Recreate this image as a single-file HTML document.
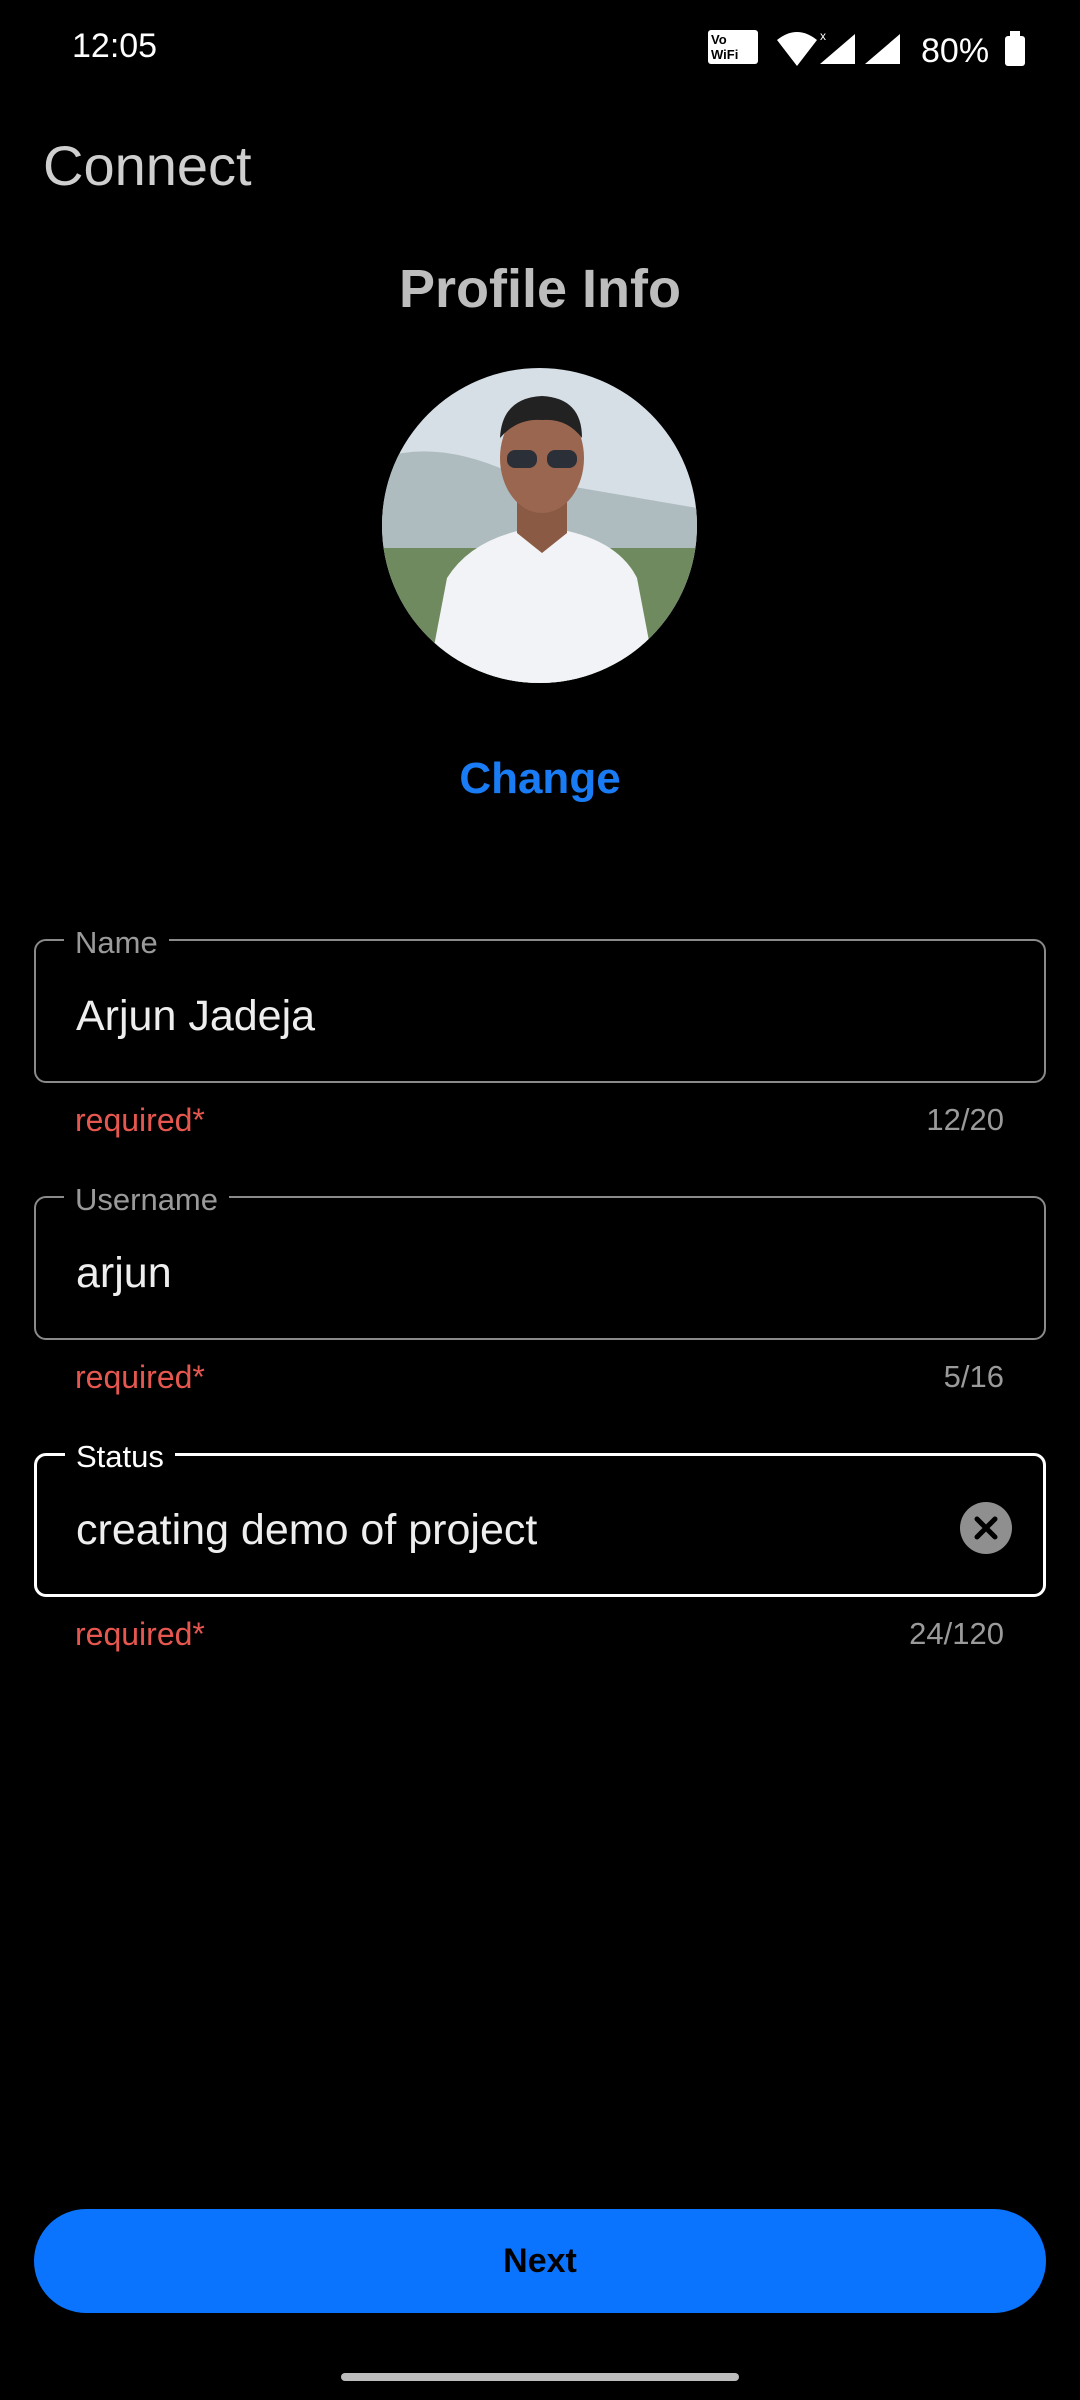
<!DOCTYPE html>
<html><head><meta charset="utf-8">
<style>
*{margin:0;padding:0;box-sizing:border-box}
html,body{width:1080px;height:2400px;background:#000;overflow:hidden;font-family:"Liberation Sans",Roboto,sans-serif}
.abs{position:absolute}
.field{position:absolute;left:34px;width:1012px;height:144px;border:2px solid #8a8a8a;border-radius:12px}
.field.active{border:3px solid #fff}
.lbl{position:absolute;left:28px;top:-16px;background:#000;padding:0 11px;font-size:31px;color:#9a9a9a;line-height:36px;height:30px}
.active .lbl{color:#fff;top:-17px}
.val{position:absolute;left:40px;top:51px;font-size:43px;color:#eee;line-height:48px}
.req{position:absolute;left:75px;font-size:32px;color:#e5574f;line-height:36px}
.cnt{position:absolute;right:76px;font-size:31px;color:#9a9a9a;line-height:36px}
</style></head><body>
<div class="abs" style="left:72px;top:26px;font-size:34px;color:#fff;line-height:40px">12:05</div>
<div class="abs" style="left:708px;top:30px;width:50px;height:34px;background:#fff;border-radius:3px;font-size:13px;font-weight:bold;color:#000;line-height:15px;padding:2px 3px">Vo<br>WiFi</div>
<svg class="abs" style="left:775px;top:28px" width="260" height="40" viewBox="0 0 260 40">
<path d="M2 12 Q22 -4 42 12 L22 38 Z" fill="#fff"/>
<text x="45" y="12" font-size="12" fill="#fff" font-family="Liberation Sans">x</text>
<path d="M45 36 L80 6 L80 36 Z" fill="#fff"/>
<path d="M90 36 L125 6 L125 36 Z" fill="#fff"/>
<text x="146" y="34" font-size="34" fill="#fff" font-family="Liberation Sans">80%</text>
<rect x="230" y="8" width="20" height="30" rx="3" fill="#fff"/><rect x="235" y="3" width="10" height="6" fill="#fff"/>
</svg>
<div class="abs" style="left:43px;top:134px;font-size:56px;color:#cfcfcf;line-height:64px">Connect</div>
<div class="abs" style="left:0;width:1080px;text-align:center;top:257px;font-size:54px;font-weight:bold;color:#bdbdbd;line-height:64px">Profile Info</div>
<svg class="abs" style="left:382px;top:368px" width="315" height="315" viewBox="0 0 315 315">
<defs><clipPath id="c"><circle cx="157.5" cy="157.5" r="157.5"/></clipPath></defs>
<g clip-path="url(#c)">
<rect width="315" height="315" fill="#d6dfe6"/>
<path d="M0 90 Q60 70 140 110 L315 140 L315 315 L0 315Z" fill="#aebcbf"/>
<path d="M0 180 L315 180 L315 315 L0 315Z" fill="#6f8a5e"/>
<path d="M45 315 L65 210 Q90 170 150 160 L170 160 Q235 170 255 210 L275 315Z" fill="#f2f3f6"/>
<path d="M135 120 L135 165 L160 185 L185 165 L185 120Z" fill="#8a5a44"/>
<ellipse cx="160" cy="90" rx="42" ry="55" fill="#9a6650"/>
<path d="M118 70 Q120 30 160 28 Q200 30 200 70 Q185 50 160 52 Q135 50 118 70Z" fill="#222"/>
<rect x="125" y="82" width="30" height="18" rx="8" fill="#2a2f38"/><rect x="165" y="82" width="30" height="18" rx="8" fill="#2a2f38"/>
</g></svg>
<div class="abs" style="left:0;width:1080px;text-align:center;top:753px;font-size:44px;font-weight:bold;color:#1a7cf5;line-height:52px">Change</div>

<div class="field" style="top:939px"><div class="lbl">Name</div><div class="val">Arjun Jadeja</div></div>
<div class="req" style="top:1102px">required*</div><div class="cnt" style="top:1102px">12/20</div>

<div class="field" style="top:1196px"><div class="lbl">Username</div><div class="val">arjun</div></div>
<div class="req" style="top:1359px">required*</div><div class="cnt" style="top:1359px">5/16</div>

<div class="field active" style="top:1453px"><div class="lbl">Status</div><div class="val" style="left:39px;top:50px">creating demo of project</div>
<svg class="abs" style="left:922px;top:45px" width="54" height="54" viewBox="0 0 54 54"><circle cx="27" cy="27" r="26" fill="#8f8f8f"/><path d="M18 18 L36 36 M36 18 L18 36" stroke="#000" stroke-width="5" stroke-linecap="round"/></svg>
</div>
<div class="req" style="top:1616px">required*</div><div class="cnt" style="top:1616px">24/120</div>

<div class="abs" style="left:34px;top:2209px;width:1012px;height:104px;border-radius:52px;background:#0a74ff;text-align:center;line-height:104px;font-size:34px;font-weight:bold;color:#000">Next</div>
<div class="abs" style="left:341px;top:2373px;width:398px;height:8px;border-radius:4px;background:#bdbdbd"></div>
</body></html>
